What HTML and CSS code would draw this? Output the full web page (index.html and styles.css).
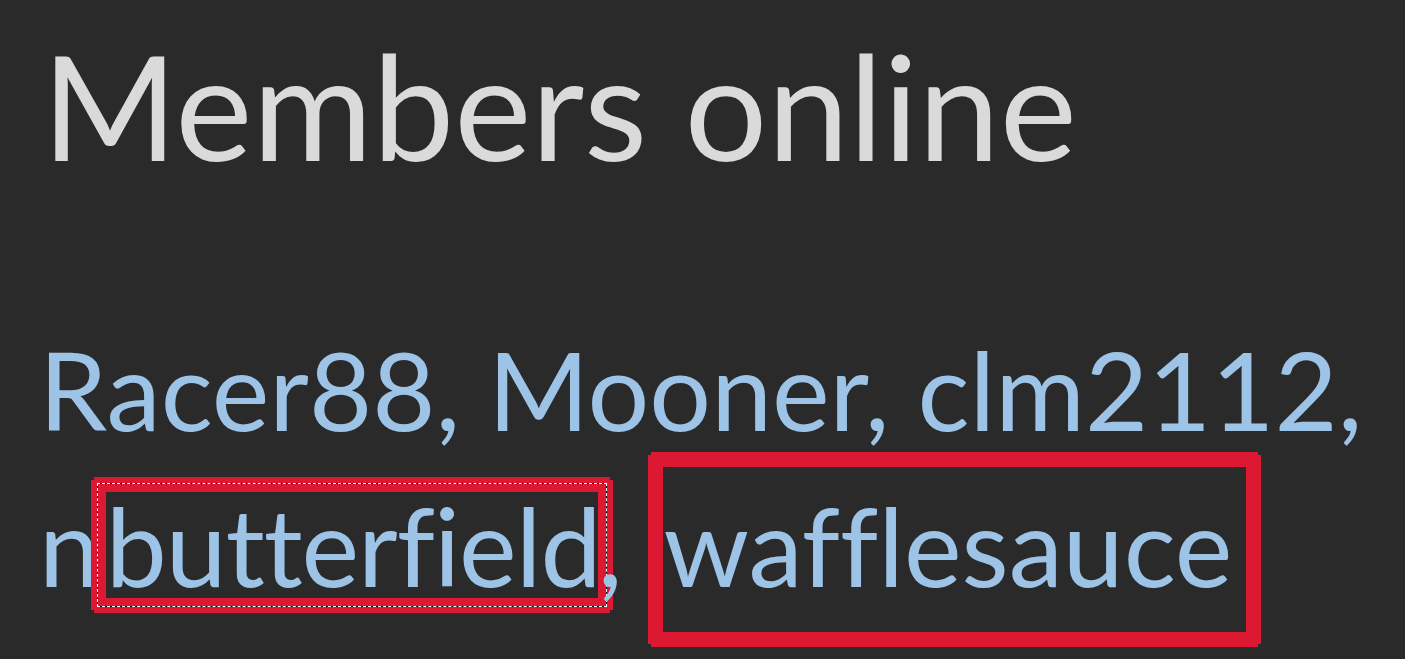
FILE: index.html
```html
<!DOCTYPE html>
<html lang="en">
<head>
    <meta charset="UTF-8">
    <meta name="viewport" content="width=device-width, initial-scale=1.0">
    <title>Members online</title>
    <link rel="stylesheet" href="styles.css">
</head>
<body>

    <!-- Online members block -->
    <section class="online">
        <h1 class="online-title">Members online</h1>
        <p class="online-list">
            <a href="#" class="member">Racer88</a>, <a href="#" class="member">Mooner</a>, <a href="#" class="member">clm2112</a>,
            <a href="#" class="member nowrap">n<span class="hl hl-focus">butterfield</span></a>, <a href="#" class="member hl hl-box">wafflesauce</a>
        </p>
    </section>

</body>
</html>
```

FILE: styles.css
```css
/* General */
html,
body {
    height: 100%;
}

body {
    margin: 0;
    padding: 17px 0 0 39px;
    box-sizing: border-box;
    background-color: #2a2a2a;
    font-family: Lato, "Open Sans", sans-serif;
    font-variant-ligatures: none;
}

/* Heading */
.online-title {
    margin: 0 0 0 3px;
    font-size: 146px;
    font-weight: 400;
    line-height: 1.2;
    color: #dadada;
}

/* Member list */
.online-list {
    margin: 119px 0 0;
    font-size: 109px;
    line-height: 156px;
    color: #9dc3e6;
}

.member {
    color: #9dc3e6;
    text-decoration: none;
}

.nowrap {
    white-space: nowrap;
}

/* Red highlight marks */
.hl {
    display: inline-block;
}

.hl-focus {
    width: 492px;
    margin-left: 6px;
    line-height: 106px;
    letter-spacing: -1px;
    outline: 1px dashed #fff;
    outline-offset: 8px;
    box-shadow:
        0 0 0 8px #dc1832,
        0 0 0 9px #000,
        3px 0 0 12px #dc1832,
        -3px 0 0 12px #dc1832,
        0 3px 0 12px #dc1832,
        0 -3px 0 12px #dc1832;
}

.hl-box {
    margin-left: 13px;
    line-height: 156px;
    padding: 0 14px 9px 0;
    box-shadow:
        3px 0 0 12px #dc1832,
        -3px 0 0 12px #dc1832,
        0 3px 0 12px #dc1832,
        0 -3px 0 12px #dc1832;
}
```
